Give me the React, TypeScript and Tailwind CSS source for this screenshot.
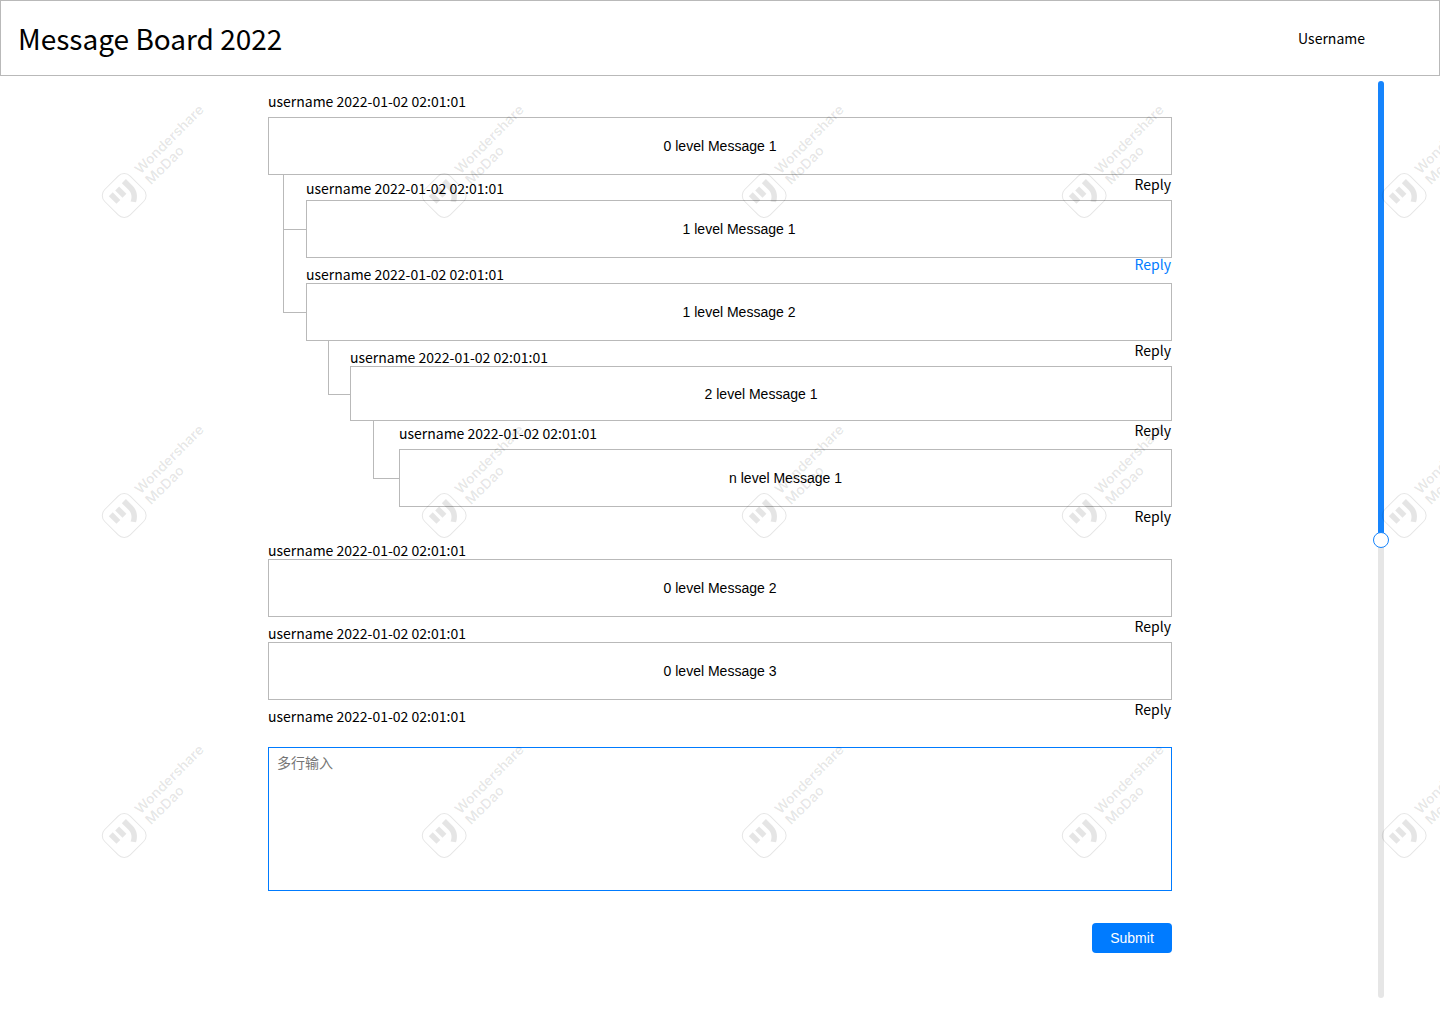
import { useState } from "react";

type Message = {
  id: string;
  text: string;
  author: string;
  meta: string;
  box: string;
  activeReply?: boolean;
  stem?: string;
  elbow?: string;
  children?: Message[];
};

const AUTHOR = "username 2022-01-02 02:01:01";

const threads: Message[] = [
  {
    id: "0-1",
    text: "0 level Message 1",
    author: AUTHOR,
    meta: "h-[41px] pb-[7px]",
    box: "h-[58px]",
    children: [
      {
        id: "1-1",
        text: "1 level Message 1",
        author: AUTHOR,
        meta: "h-[25px] pb-[3px]",
        box: "h-[58px]",
        activeReply: true,
        stem: "ml-[15px] w-[23px]",
        elbow: "h-[55px]",
      },
      {
        id: "1-2",
        text: "1 level Message 2",
        author: AUTHOR,
        meta: "h-[25px]",
        box: "h-[58px]",
        stem: "ml-[15px] w-[23px]",
        elbow: "h-[55px]",
        children: [
          {
            id: "2-1",
            text: "2 level Message 1",
            author: AUTHOR,
            meta: "h-[25px]",
            box: "h-[55px]",
            stem: "ml-[22px] w-[22px]",
            elbow: "h-[54px]",
            children: [
              {
                id: "n-1",
                text: "n level Message 1",
                author: AUTHOR,
                meta: "h-[28px] pb-[7px]",
                box: "h-[58px]",
                stem: "ml-[23px] w-[26px]",
                elbow: "h-[58px]",
              },
            ],
          },
        ],
      },
    ],
  },
  { id: "0-2", text: "0 level Message 2", author: AUTHOR, meta: "h-[52px]", box: "h-[58px]" },
  { id: "0-3", text: "0 level Message 3", author: AUTHOR, meta: "h-[25px]", box: "h-[58px]" },
];

function MessageBody({ message }: { message: Message }) {
  return (
    <div className="min-w-0 flex-1">
      <div className={`flex items-end leading-[18px] ${message.meta}`}>{message.author}</div>
      <div
        className={`flex items-center justify-center border border-[#b9b9b9] font-['Liberation_Sans',sans-serif] ${message.box}`}
      >
        {message.text}
      </div>
      {/* Zero-height row, so the link shares its line with the next author */}
      <div className="flex h-0 items-start justify-end pr-px">
        <button
          type="button"
          className={message.activeReply ? "leading-3 text-[#007bff]" : "leading-[18px] hover:text-[#007bff]"}
        >
          Reply
        </button>
      </div>
      {message.children && <Replies messages={message.children} />}
    </div>
  );
}

function Replies({ messages }: { messages: Message[] }) {
  return (
    <ul>
      {messages.map((message, index) => (
        <li key={message.id} className="flex">
          <div className={`flex shrink-0 flex-col ${message.stem}`}>
            <div className={`shrink-0 border-b border-l border-[#b9b9b9] ${message.elbow}`} />
            {index < messages.length - 1 && <div className="flex-1 border-l border-[#b9b9b9]" />}
          </div>
          <MessageBody message={message} />
        </li>
      ))}
    </ul>
  );
}

function Watermark() {
  return (
    <div
      aria-hidden="true"
      className="pointer-events-none absolute inset-0 grid grid-cols-[repeat(5,320px)] content-start overflow-hidden"
    >
      {Array.from({ length: 15 }, (_, i) => (
        <svg key={i} width="320" height="320" viewBox="0 0 320 320" className="fill-black/10">
          <g transform="translate(124.2 195.5) rotate(-45)">
            <rect x="-18" y="-18" width="36" height="36" rx="8.5" className="fill-none stroke-black/10" />
            <path d="M-11.4 -10.4H-5.8V.4H-11.4ZM-2.8 -10H2.8V.4H-2.8ZM7 -10.4H12.8V-1C12.8 5.5 9 10.5 3.5 13.2L.2 8.8C4.5 7 7 3.5 7 -1Z" />
            <text x="26" y="-3" className="font-['Inter',sans-serif] text-[14px] font-semibold">
              Wondershare
            </text>
            <text x="26" y="12" className="font-['Inter',sans-serif] text-[14px] font-semibold">
              MoDao
            </text>
          </g>
        </svg>
      ))}
    </div>
  );
}

export default function App() {
  const [position, setPosition] = useState(50);
  const [draft, setDraft] = useState("");

  return (
    <div className="relative flex min-h-screen flex-col bg-white font-['Noto_Sans_CJK_SC',sans-serif] text-sm text-black">
      <header className="flex h-[76px] items-center justify-between border border-[#b9b9b9] pr-[74px] pl-[17px]">
        <h1 className="text-[28px] leading-10">Message Board 2022</h1>
        <span className="leading-5">Username</span>
      </header>

      <div className="grid flex-1 grid-cols-[minmax(0,1fr)_minmax(0,904px)_minmax(0,1fr)]">
        <main className="col-start-2">
          {threads.map((message) => (
            <article key={message.id} className="flex">
              <MessageBody message={message} />
            </article>
          ))}

          <form onSubmit={(event) => event.preventDefault()} className="flex flex-col pt-[7px]">
            <label htmlFor="draft" className="self-start leading-[18px]">
              {AUTHOR}
            </label>
            <textarea
              id="draft"
              value={draft}
              onChange={(event) => setDraft(event.target.value)}
              placeholder="多行输入"
              className="mt-[22px] h-36 resize-none border border-[#007bff] px-2 py-1 leading-5 outline-none placeholder:text-[#757575]"
            />
            <button
              type="submit"
              className="mt-8 h-[30px] w-20 self-end rounded bg-[#007bff] font-['Liberation_Sans',sans-serif] text-white"
            >
              Submit
            </button>
          </form>
        </main>

        <div className="flex justify-end pt-[5px] pr-[51px] pb-[26px]">
          <input
            type="range"
            aria-label="Scroll position"
            min={0}
            max={100}
            value={position}
            onChange={(event) => setPosition(Number(event.target.value))}
            style={{ "--fill": `${position}%` } as React.CSSProperties}
            className="w-4 appearance-none bg-transparent [writing-mode:vertical-lr] [&::-webkit-slider-runnable-track]:w-[6px] [&::-webkit-slider-runnable-track]:rounded-full [&::-webkit-slider-runnable-track]:bg-[linear-gradient(to_bottom,#1684fc_var(--fill),#e6e6e6_var(--fill))] [&::-webkit-slider-thumb]:-ml-[5px] [&::-webkit-slider-thumb]:size-4 [&::-webkit-slider-thumb]:appearance-none [&::-webkit-slider-thumb]:rounded-full [&::-webkit-slider-thumb]:border [&::-webkit-slider-thumb]:border-[#1684fc] [&::-webkit-slider-thumb]:bg-white"
          />
        </div>
      </div>

      <Watermark />
    </div>
  );
}
